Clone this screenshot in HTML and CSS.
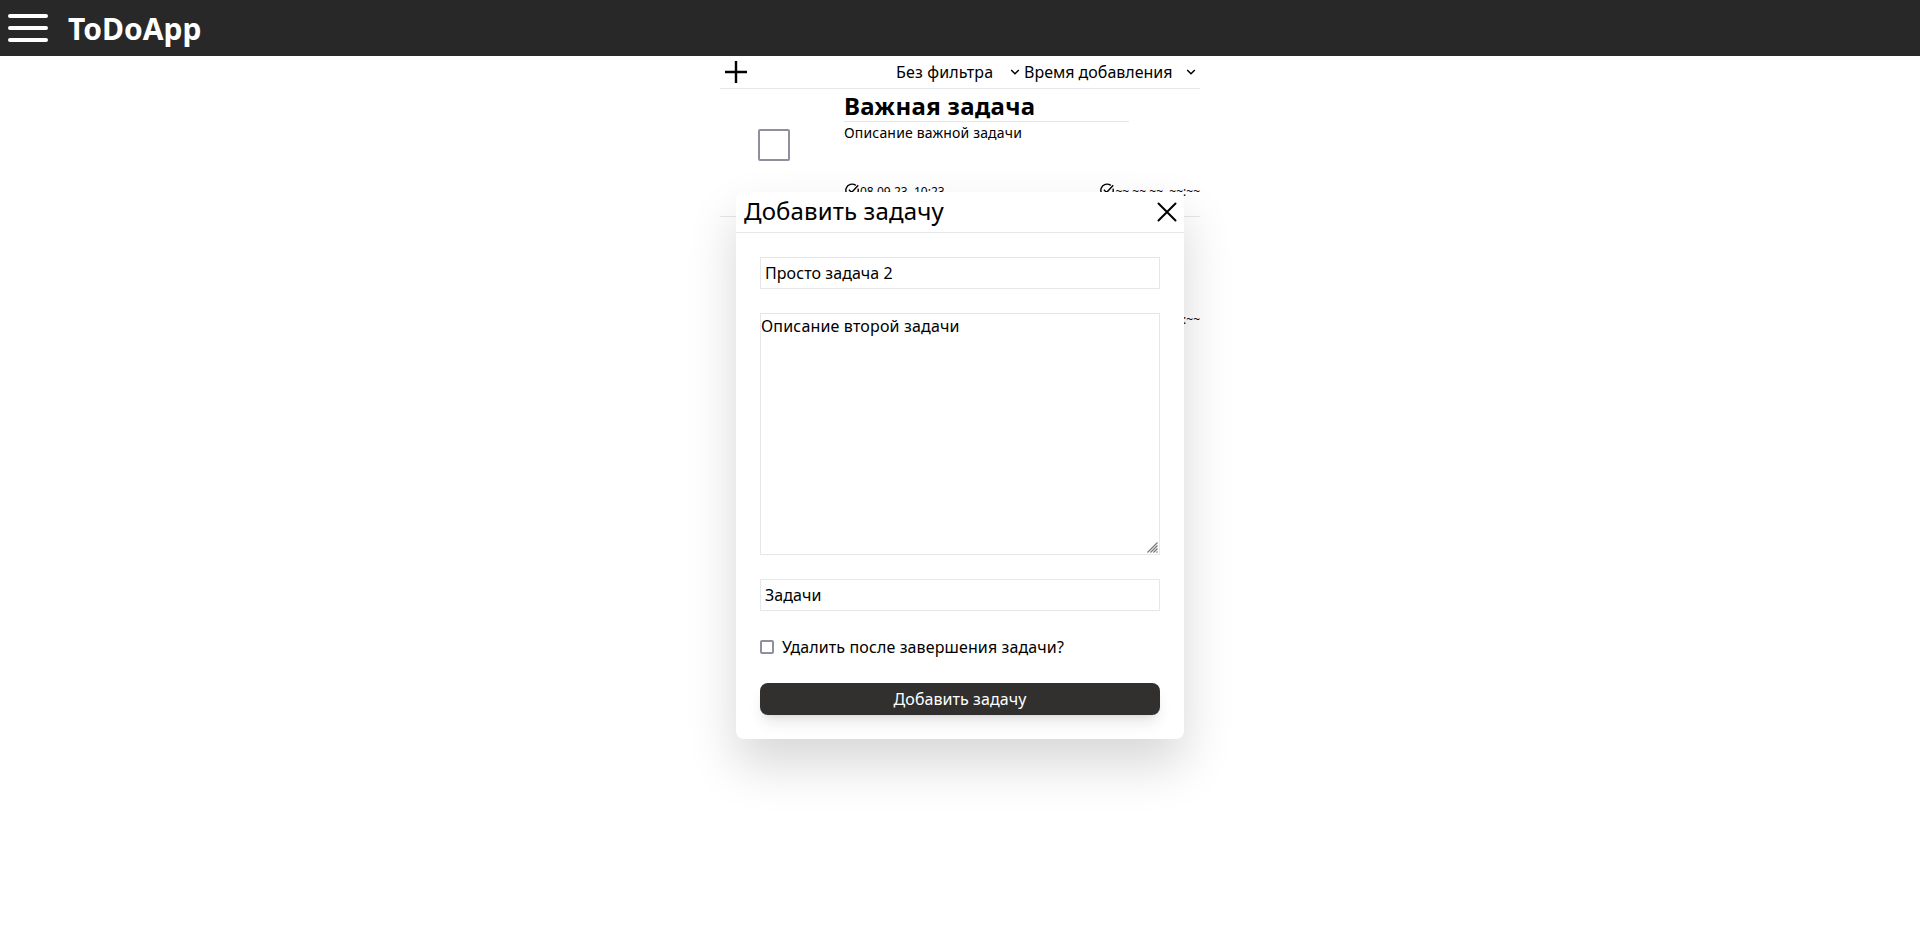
FILE: index.html
```html
<!DOCTYPE html>
<html lang="ru">
<head>
<meta charset="utf-8">
<title>ToDoApp</title>
<link rel="stylesheet" href="styles.css">
</head>
<body>
<header class="navbar">
  <button class="burger" aria-label="Меню"><span></span><span></span><span></span></button>
  <h1 class="brand">ToDoApp</h1>
</header>
<main class="board">
  <div class="toolbar">
    <svg class="plus" width="32" height="32" viewBox="0 0 32 32"><path d="M5 16H27M16 5V27" /></svg>
    <div class="select filter"><span>Без фильтра</span><svg width="10" height="6" viewBox="0 0 10 6"><path d="M1.2 1L5 4.8L8.8 1"/></svg></div>
    <div class="select sort"><span>Время добавления</span><svg width="10" height="6" viewBox="0 0 10 6"><path d="M1.2 1L5 4.8L8.8 1"/></svg></div>
  </div>
  <article class="task">
    <div class="check-cell"><span class="check big"></span></div>
    <div class="task-body">
      <h2 class="task-title">Важная задача</h2>
      <p class="task-text">Описание важной задачи</p>
      <div class="dates">
        <span class="date"><svg width="16" height="16" viewBox="0 0 16 16"><path d="M14 5.6A6.2 6.2 0 1 1 11.8 2.4M4.9 6.8L7.6 9.4L14.2 2.2"/></svg>08.09.23, 10:23</span>
        <span class="date"><svg width="16" height="16" viewBox="0 0 16 16"><path d="M14 5.6A6.2 6.2 0 1 1 11.8 2.4M4.9 6.8L7.6 9.4L14.2 2.2"/></svg>~~.~~.~~, ~~:~~</span>
      </div>
    </div>
  </article>
  <article class="task">
    <div class="check-cell"></div>
    <div class="task-body">
      <div class="dates">
        <span></span>
        <span class="date">~~.~~.~~, ~~:~~</span>
      </div>
    </div>
  </article>
</main>
<section class="modal">
  <div class="modal-head">
    <h2 class="modal-title">Добавить задачу</h2>
    <svg width="20" height="20" viewBox="0 0 20 20"><path d="M1.5 1.5L18.5 18.5M18.5 1.5L1.5 18.5"/></svg>
  </div>
  <div class="form">
    <div class="field">Просто задача 2</div>
    <div class="field area">Описание второй задачи
      <svg class="grip" width="11" height="11" viewBox="0 0 11 11"><path d="M0.5 10.5L10.5 0.5M3.5 10.5L10.5 3.5M6.5 10.5L10.5 6.5M9.5 10.5L10.5 9.5"/></svg>
    </div>
    <div class="field">Задачи</div>
    <label class="option"><span class="check"></span>Удалить после завершения задачи?</label>
    <button class="submit">Добавить задачу</button>
  </div>
</section>
</body>
</html>
```
FILE: styles.css
```css
* { box-sizing: border-box; margin: 0; padding: 0; }
body { font: 16px/24px "Noto Sans", sans-serif; color: #000; background: #fff; height: 931px; overflow: hidden; }
svg { fill: none; stroke: #000; flex: none; }
button { border: 0; font: inherit; }
.navbar { height: 56px; background: #282828; display: flex; align-items: center; gap: 20px; padding-left: 8px; }
.burger { width: 40px; display: flex; flex-direction: column; gap: 8px; background: none; }
.burger span { height: 4px; border-radius: 2px; background: #fff; }
.brand { color: #fff; font-size: 30px; line-height: 36px; font-weight: 700; padding-top: 2px; }
.board { width: 480px; margin: 0 auto; }
.toolbar { height: 33px; border-bottom: 1px solid #e5e7eb; display: flex; align-items: center; }
.plus { stroke-width: 2.4; margin-right: auto; }
.select { display: flex; align-items: center; justify-content: space-between; padding-right: 4px; }
.select svg { stroke-width: 1.5; }
.filter { width: 128px; letter-spacing: .15px; }
.sort { width: 176px; }
.task { height: 128px; display: flex; border-bottom: 1px solid #e5e7eb; }
.task:last-child { border: 0; height: 127px; }
.check-cell { width: 124px; padding: 40px 0 0 38px; }
.check { display: block; width: 14px; height: 14px; border: 2px solid #8f8f9d; border-radius: 2px; background: #fff; }
.big { width: 32px; height: 32px; }
.task-body { flex: 1; display: flex; flex-direction: column; padding-bottom: 16px; }
.task-title { width: 285px; height: 33px; border-bottom: 1px solid #e5e7eb; font-size: 24px; line-height: 34px; letter-spacing: .33px; }
.task-text { font-size: 14px; line-height: 22px; letter-spacing: .17px; }
.dates { display: flex; justify-content: space-between; margin-top: auto; font-size: 12px; line-height: 16px; white-space: nowrap; }
.date { display: flex; }
.date svg { stroke-width: 1.4; margin-top: -1px; }
.modal { position: absolute; top: 192px; left: 736px; width: 448px; background: #fff; border-radius: 8px; box-shadow: 0 25px 50px rgba(0, 0, 0, .16); }
.modal-head { height: 41px; border-bottom: 1px solid #e5e7eb; display: flex; align-items: center; justify-content: space-between; padding: 0 7px 0 8px; }
.modal-head svg { stroke-width: 2; stroke-linecap: round; }
.modal-title { font-size: 24px; line-height: 32px; padding-bottom: 2px; font-weight: 400; letter-spacing: .14px; }
.form { display: flex; flex-direction: column; gap: 24px; padding: 24px; }
.field { height: 32px; border: 1px solid #e5e7eb; padding: 3px 4px; letter-spacing: .07px; }
.area { position: relative; height: 242px; padding: 0; letter-spacing: .17px; }
.grip { position: absolute; right: 1px; bottom: 1px; stroke: #777; stroke-width: 1.2; }
.option { display: flex; align-items: center; gap: 8px; letter-spacing: .12px; }
.submit { height: 32px; border-radius: 8px; background: #32302f; color: #fff; letter-spacing: .07px; box-shadow: 0 10px 15px -3px rgba(0, 0, 0, .1), 0 4px 6px -4px rgba(0, 0, 0, .1); }
```
